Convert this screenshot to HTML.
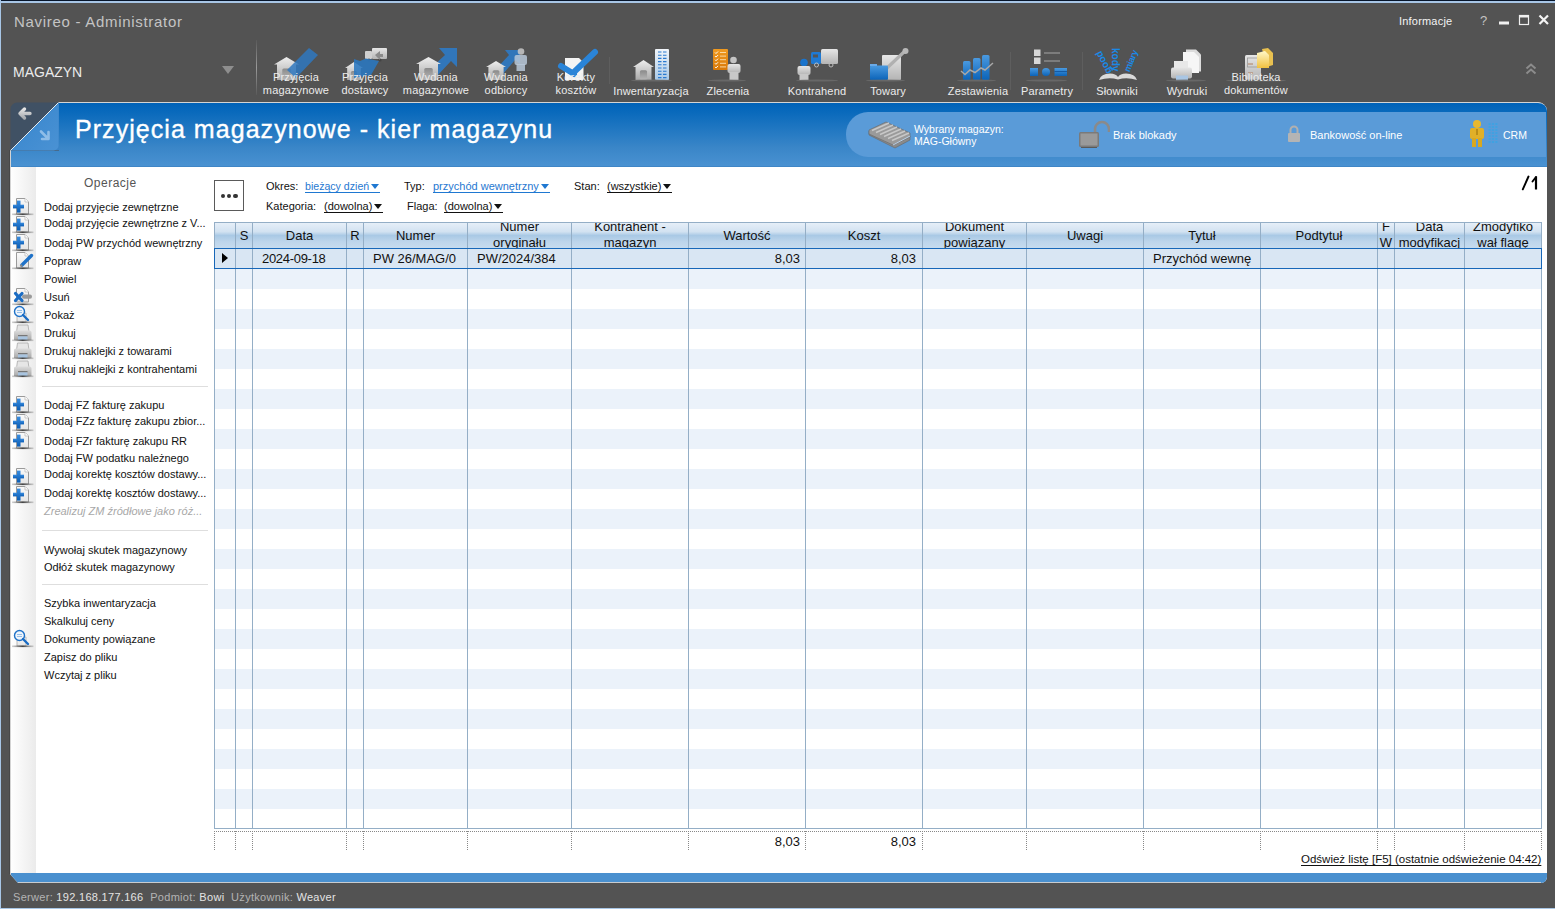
<!DOCTYPE html>
<html><head><meta charset="utf-8">
<style>
*{box-sizing:border-box}
html,body{margin:0;padding:0}
body{width:1555px;height:909px;overflow:hidden;position:relative;background:#535353;font-family:"Liberation Sans",sans-serif}
.a{position:absolute}
.t{position:absolute;white-space:nowrap;line-height:1}
.tl{position:absolute;white-space:nowrap;color:#ececec;font-size:11px;line-height:13px;text-align:center;letter-spacing:0.15px}
.si{position:absolute;left:44px;white-space:nowrap;color:#111;font-size:11px;line-height:13px;letter-spacing:0}
.sep{position:absolute;left:42px;width:166px;height:1px;background:#dedede}
.vl{position:absolute;top:222px;width:1px;height:607px;background:#94aec6}
.row{position:absolute;left:215px;width:1326px;height:20px;background:#ebf2fa}
.gh{position:absolute;top:0;height:25px;text-align:center;color:#111;font-size:13px;line-height:16px;overflow:hidden}
.gc{position:absolute;top:252px;color:#111;font-size:13px;line-height:1;white-space:nowrap}
.dv{position:absolute;top:831px;width:1px;height:19px;background-image:linear-gradient(#888 50%,transparent 50%);background-size:1px 2px}
.flab{position:absolute;color:#111;font-size:11px;line-height:1;white-space:nowrap}
.flnk{position:absolute;font-size:11px;line-height:1;white-space:nowrap;text-decoration:underline;text-underline-offset:2px}
.tri{position:absolute;width:0;height:0;border-left:4px solid transparent;border-right:4px solid transparent;border-top:5px solid #111}
</style></head><body>

<div class="a" style="left:0;top:0;width:1555px;height:1px;background:#06152b"></div>
<div class="a" style="left:0;top:1px;width:1555px;height:2px;background:#a8c6e6"></div>
<div class="a" style="left:0;top:0;width:1px;height:909px;background:#a8c6e6"></div>
<div class="a" style="left:0;top:908px;width:1555px;height:1px;background:#a8c6e6"></div>
<div class="t" style="left:14px;top:14px;font-size:15px;color:#c4c4c4;letter-spacing:0.7px">Navireo - Administrator</div>
<div class="t" style="left:1399px;top:16px;font-size:11px;color:#f4f4f4;letter-spacing:0.2px">Informacje</div>
<div class="t" style="left:13px;top:65px;font-size:14px;color:#ececec">MAGAZYN</div>
<div class="a" style="left:222px;top:66px;width:0;height:0;border-left:6.5px solid transparent;border-right:6.5px solid transparent;border-top:8px solid #8e8e8e"></div>
<div class="a" style="left:256px;top:40px;width:1px;height:55px;background:linear-gradient(#5a5a5a,#9a9a9a 50%,#5a5a5a)"></div>
<div class="a" style="left:10px;top:102px;width:1537px;height:781px;background:#fff;border-left:1px solid #d4d4d4;border-top:1px solid #d4d4d4;border-radius:0 9px 6px 0;overflow:hidden;clip-path:polygon(0 0,100% 0,100% 100%,8px 100%,0 calc(100% - 9px))">
<div class="a" style="left:0;top:0;width:1536px;height:64px;background:linear-gradient(#0062b8 0%,#0a6abc 15%,#3a86c8 70%,#4a92d2 100%)"></div>
<div class="a" style="left:0;top:770px;width:1536px;height:10px;background:#4a90cf"></div>
<div class="a" style="left:0;top:63px;width:1536px;height:1px;background:#3f86c6"></div>
</div>
<div class="t" style="left:75px;top:117px;font-size:25px;color:#fff;letter-spacing:1.05px;-webkit-text-stroke:0.35px #fff">Przyjęcia magazynowe - kier magazynu</div>
<div class="a" style="left:11px;top:167px;width:25px;height:706px;background:linear-gradient(90deg,#fff,#ebebeb)"></div>
<svg class="a" style="left:0;top:0" width="1555" height="100" viewBox="0 0 1555 100"><defs><linearGradient id="gHouse" x1="0" y1="0" x2="0" y2="1"><stop offset="0" stop-color="#eeeeee"/><stop offset="1" stop-color="#a9a9a9"/></linearGradient><linearGradient id="gDoor" x1="0" y1="0" x2="0" y2="1"><stop offset="0" stop-color="#8a8a8a"/><stop offset="1" stop-color="#b8b8b8"/></linearGradient><linearGradient id="gBlue" x1="0" y1="0" x2="0" y2="1"><stop offset="0" stop-color="#4a9ae0"/><stop offset="1" stop-color="#0b63b8"/></linearGradient><linearGradient id="gBlueA" x1="1" y1="0" x2="0" y2="1"><stop offset="0" stop-color="#3f86c8"/><stop offset="1" stop-color="#2a6aa8"/></linearGradient><linearGradient id="gGray" x1="0" y1="0" x2="0" y2="1"><stop offset="0" stop-color="#e6e6e6"/><stop offset="1" stop-color="#b4b4b4"/></linearGradient><linearGradient id="gBld" x1="0" y1="0" x2="0" y2="1"><stop offset="0" stop-color="#f2f6fa"/><stop offset="1" stop-color="#a8c8e6"/></linearGradient><linearGradient id="gOr" x1="0" y1="0" x2="0" y2="1"><stop offset="0" stop-color="#f09a20"/><stop offset="1" stop-color="#d87808"/></linearGradient><linearGradient id="gYel" x1="0" y1="0" x2="0" y2="1"><stop offset="0" stop-color="#fff8c8"/><stop offset="1" stop-color="#f0c040"/></linearGradient></defs><path d="M609.5 57V84" stroke="#5e5e5e" stroke-width="1"/><path d="M1082.5 52V90" stroke="#5e5e5e" stroke-width="1"/><path d="M1010.5 52V90" stroke="#5e5e5e" stroke-width="1"/><path d="M274,64.5 L286.5,57 L299,64.5 L296.0,64.5 L296.0,80 L277.0,80 L277.0,64.5 Z" fill="url(#gHouse)"/><rect x="282.25" y="68.375" width="8.5" height="11.625" rx="1.5" fill="url(#gDoor)"/><path d="M309,48 L318,55 L296,78 L287,70 Z" fill="#2f78c0" opacity="0.85"/><rect x="372" y="48" width="15" height="11" rx="1" fill="url(#gGray)"/><rect x="365" y="51" width="7" height="8" rx="1" fill="#cfcfcf"/><circle cx="369" cy="60" r="1.6" fill="#444"/><circle cx="380" cy="60" r="1.6" fill="#444"/><path d="M375 55l5-4v3h3v3h-3v3z" fill="#8a8a8a"/><path d="M345,68 L354.0,62 L363,68 L360.84,68 L360.84,80 L347.16,80 L347.16,68 Z" fill="url(#gHouse)"/><rect x="350.94" y="71.0" width="6.12" height="9.0" rx="1.5" fill="url(#gDoor)"/><path d="M354,59 L360,61 L366,58.5 L379,61 L371,75 L354,78 Z" fill="#2a78c0" opacity="0.88"/><path d="M439,48 L457,48 L457,67 L451,61 L437,76 L430,69 L445,55 Z" fill="#2f78c0" opacity="0.95"/><path d="M416,64 L428.5,57 L441,64 L438.0,64 L438.0,80 L419.0,80 L419.0,64 Z" fill="url(#gHouse)"/><rect x="424.25" y="68.0" width="8.5" height="12.0" rx="1.5" fill="url(#gDoor)"/><path d="M505,50 L520,50 L520,64 L515,60 L503,74 L497,68 L509,55 Z" fill="#2f78c0" opacity="0.95"/><path d="M486,67 L496.0,61 L506,67 L503.6,67 L503.6,80 L488.4,80 L488.4,67 Z" fill="url(#gHouse)"/><rect x="492.6" y="70.25" width="6.800000000000001" height="9.75" rx="1.5" fill="url(#gDoor)"/><circle cx="521" cy="51.5" r="3.3" fill="#c8c8c8" opacity="0.85"/><rect x="514.5" y="55" width="12.5" height="10" rx="2" fill="#b8c8d8" opacity="0.85"/><rect x="516.5" y="64" width="8.5" height="7" fill="#b8c8d8" opacity="0.85"/><path d="M565,58 H579 L583.5,62.5 V80 H565 Z" fill="#f4f4f4"/><path d="M561,66 L574,74 M573,73 L595,52" stroke="#2a84d8" stroke-width="6" stroke-linecap="round" fill="none"/><path d="M633,67 L643.5,60 L654,67 L651.48,67 L651.48,80 L635.52,80 L635.52,67 Z" fill="url(#gHouse)"/><rect x="639.93" y="70.25" width="7.140000000000001" height="9.75" rx="1.5" fill="url(#gDoor)"/><rect x="655" y="49" width="14" height="31" rx="1" fill="url(#gBld)"/><path d="M658,52.0h3.5M663,52.0h3.5" stroke="#2a7ad0" stroke-width="1.1"/><path d="M658,55.2h3.5M663,55.2h3.5" stroke="#2a7ad0" stroke-width="1.1"/><path d="M658,58.4h3.5M663,58.4h3.5" stroke="#2a7ad0" stroke-width="1.1"/><path d="M658,61.6h3.5M663,61.6h3.5" stroke="#2a7ad0" stroke-width="1.1"/><path d="M658,64.8h3.5M663,64.8h3.5" stroke="#2a7ad0" stroke-width="1.1"/><path d="M658,68.0h3.5M663,68.0h3.5" stroke="#2a7ad0" stroke-width="1.1"/><path d="M658,71.2h3.5M663,71.2h3.5" stroke="#2a7ad0" stroke-width="1.1"/><path d="M658,74.4h3.5M663,74.4h3.5" stroke="#2a7ad0" stroke-width="1.1"/><path d="M658,77.6h3.5M663,77.6h3.5" stroke="#2a7ad0" stroke-width="1.1"/><ellipse cx="651.5" cy="80.5" rx="20.5" ry="1" fill="#6e6e6e" opacity="0.8"/><rect x="713" y="49" width="15" height="21" rx="1" fill="url(#gOr)"/><path d="M715,52.5 l1,1 l2,-2" stroke="#fff" stroke-width="1" fill="none"/><path d="M720,52.5h6" stroke="#fde0b0" stroke-width="0.9"/><path d="M715,56.1 l1,1 l2,-2" stroke="#fff" stroke-width="1" fill="none"/><path d="M720,56.1h6" stroke="#fde0b0" stroke-width="0.9"/><path d="M715,59.7 l1,1 l2,-2" stroke="#fff" stroke-width="1" fill="none"/><path d="M720,59.7h6" stroke="#fde0b0" stroke-width="0.9"/><path d="M715,63.3 l1,1 l2,-2" stroke="#fff" stroke-width="1" fill="none"/><path d="M720,63.3h6" stroke="#fde0b0" stroke-width="0.9"/><path d="M715,66.9 l1,1 l2,-2" stroke="#fff" stroke-width="1" fill="none"/><path d="M720,66.9h6" stroke="#fde0b0" stroke-width="0.9"/><circle cx="733.5" cy="60" r="3.3" fill="#c4c4c4"/><rect x="727.5" y="64" width="13" height="9" rx="2" fill="url(#gGray)"/><rect x="729.5" y="72" width="9" height="8" fill="#c8c8c8"/><ellipse cx="727.0" cy="80.5" rx="19.0" ry="1" fill="#6e6e6e" opacity="0.8"/><circle cx="804" cy="62.5" r="3.8" fill="#1a74cc"/><rect x="797.5" y="66" width="13" height="9" rx="2" fill="url(#gGray)"/><rect x="799.5" y="74" width="9" height="6" fill="#c8c8c8"/><rect x="811" y="52" width="10" height="12" rx="1.5" fill="#1f7ad4"/><rect x="813" y="54.5" width="5" height="3" fill="#555"/><rect x="821" y="49" width="17" height="15" rx="1.5" fill="url(#gGray)"/><circle cx="816.5" cy="65" r="2" fill="none" stroke="#bbb" stroke-width="1"/><circle cx="831" cy="65" r="2" fill="none" stroke="#bbb" stroke-width="1"/><ellipse cx="817.0" cy="80.5" rx="21.0" ry="1" fill="#6e6e6e" opacity="0.8"/><rect x="882" y="55" width="19" height="25" rx="1" fill="url(#gGray)"/><path d="M886,69 L905,51" stroke="#b0b0b0" stroke-width="3.2" stroke-linecap="round"/><circle cx="905.5" cy="51" r="3" fill="#b8b8b8"/><rect x="870" y="65.5" width="18" height="14.5" rx="1" fill="url(#gBlue)"/><rect x="870" y="64" width="7" height="2" fill="#6aaae8"/><ellipse cx="885.5" cy="80.5" rx="19.5" ry="1" fill="#6e6e6e" opacity="0.8"/><rect x="963" y="61" width="7.5" height="19" rx="1.5" fill="url(#gBlue)"/><rect x="973" y="58" width="7.5" height="22" rx="1.5" fill="url(#gBlue)"/><rect x="982" y="55" width="7.5" height="25" rx="1.5" fill="url(#gBlue)"/><path d="M961,71 L965,74.5 L970,70 L975,72.5 L981,68 L985,70 L993,63" stroke="#a8a8a8" stroke-width="1.5" fill="none"/><ellipse cx="976.5" cy="80.5" rx="19.5" ry="1" fill="#6e6e6e" opacity="0.8"/><rect x="1034" y="49.5" width="6.5" height="6.5" fill="#d8d8d8"/><rect x="1034" y="57.5" width="6.5" height="6.5" fill="#d8d8d8"/><path d="M1044,53h16M1044,61h16" stroke="#8a8a8a" stroke-width="1.6"/><rect x="1030" y="68" width="8" height="8" fill="url(#gBlue)"/><circle cx="1046" cy="72" r="4" fill="url(#gBlue)"/><rect x="1054.5" y="68" width="12.5" height="8" fill="url(#gBlue)"/><path d="M1054.5 71.5h12.5" stroke="#0a4a90" stroke-width="0.7"/><ellipse cx="1046.5" cy="80.5" rx="20.5" ry="1" fill="#6e6e6e" opacity="0.8"/><g fill="#1a8ae8" font-family="Liberation Sans" font-weight="bold" font-size="10"><text transform="translate(1112,72) rotate(243)">good</text><text transform="translate(1112,48) rotate(90)">kody</text><text transform="translate(1129.5,72.5) rotate(-68)" font-size="9" letter-spacing="-0.3">miary</text></g><path d="M1099,80 Q1101,73.5 1110,73.5 Q1116,73.5 1118,77 Q1120,73.5 1126,73.5 Q1135,73.5 1137,80 Q1127,77 1118,79.5 Q1109,77 1099,80Z" fill="#dadada"/><path d="M1186,49.5h10l5,5v17h-15z" fill="#dcdcdc"/><path d="M1183,52h11l5,5v16h-16z" fill="#f6f6f6"/><rect x="1174" y="61" width="14" height="7" fill="#e8e8e8"/><rect x="1171" y="67.5" width="21" height="11" rx="2" fill="url(#gGray)"/><rect x="1176" y="75.5" width="12" height="5" fill="#a9c6e4"/><ellipse cx="1186.0" cy="80.5" rx="20.0" ry="1" fill="#6e6e6e" opacity="0.8"/><rect x="1245" y="55" width="16" height="25" rx="1.5" fill="url(#gGray)"/><path d="M1248,64h5M1248,73h5" stroke="#b08060" stroke-width="1"/><rect x="1247.5" y="58" width="11" height="9" fill="none" stroke="#999" stroke-width="0.8"/><path d="M1262,49l6,-1l5,5v12l-6,2z" fill="#e8c050"/><path d="M1257,53l8,-2l4,4v13l-12,0z" fill="url(#gYel)"/><ellipse cx="1256.0" cy="80.5" rx="30.0" ry="1" fill="#6e6e6e" opacity="0.8"/></svg>
<div class="tl" style="left:236px;width:120px;top:71px">Przyjęcia<br>magazynowe</div>
<div class="tl" style="left:305px;width:120px;top:71px">Przyjęcia<br>dostawcy</div>
<div class="tl" style="left:376px;width:120px;top:71px">Wydania<br>magazynowe</div>
<div class="tl" style="left:446px;width:120px;top:71px">Wydania<br>odbiorcy</div>
<div class="tl" style="left:516px;width:120px;top:71px">Korekty<br>kosztów</div>
<div class="tl" style="left:591px;width:120px;top:85px">Inwentaryzacja</div>
<div class="tl" style="left:668px;width:120px;top:85px">Zlecenia</div>
<div class="tl" style="left:757px;width:120px;top:85px">Kontrahend</div>
<div class="tl" style="left:828px;width:120px;top:85px">Towary</div>
<div class="tl" style="left:918px;width:120px;top:85px">Zestawienia</div>
<div class="tl" style="left:987px;width:120px;top:85px">Parametry</div>
<div class="tl" style="left:1057px;width:120px;top:85px">Słowniki</div>
<div class="tl" style="left:1127px;width:120px;top:85px">Wydruki</div>
<div class="tl" style="left:1196px;width:120px;top:71px">Biblioteka<br>dokumentów</div>
<svg class="a" style="left:1524px;top:62px" width="14" height="14" viewBox="0 0 14 14"><path d="M2.5 6.5L7 2.5L11.5 6.5M2.5 11.5L7 7.5L11.5 11.5" stroke="#8c8c8c" stroke-width="2" fill="none"/></svg>
<svg class="a" style="left:1476px;top:12px" width="79" height="16" viewBox="0 0 79 16"><text x="4" y="13" font-family="Liberation Sans" font-size="13" fill="#c4c4c4">?</text><rect x="23" y="9.5" width="10" height="3" fill="#f0f0f0"/><rect x="43.5" y="3.5" width="9" height="9" fill="none" stroke="#f0f0f0" stroke-width="1.2"/><rect x="43" y="3" width="10" height="2.5" fill="#f0f0f0"/><path d="M63.5 3.5L72 12M72 3.5L63.5 12" stroke="#f4f4f4" stroke-width="2.2"/></svg>
<svg class="a" style="left:10px;top:102px" width="50" height="50" viewBox="0 0 50 50"><defs><linearGradient id="gTabB" x1="0" y1="0" x2="1" y2="1"><stop offset="0" stop-color="#3584cc"/><stop offset="1" stop-color="#4a92d4"/></linearGradient><linearGradient id="gArr" x1="0" y1="0" x2="0" y2="1"><stop offset="0" stop-color="#e4e4e4"/><stop offset="1" stop-color="#a8acb0"/></linearGradient></defs><rect x="0" y="0" width="49" height="49" fill="#535353"/><path d="M49,0 V48.5 H0 Z" fill="#3a84c8"/><path d="M7,0.5 H48.5 L0.5,48.5 V7 A6.5 6.5 0 0 1 7,0.5Z" fill="#405164"/><path d="M48.5,1 V43.5 A5 5 0 0 1 43.5,48.5 H1 Z" fill="url(#gTabB)"/><path d="M0.5,48.5 L48.5,0.5" stroke="#e6ecf2" stroke-width="1"/><path d="M0.5,48.5 V50" stroke="#d4d4d4" stroke-width="1"/><path d="M20 11.5H10M14.5 7L10 11.5L14.5 16" stroke="url(#gArr)" stroke-width="3.4" fill="none" stroke-linecap="round" stroke-linejoin="round"/><path d="M31 29.5L38 36.5M38.5 30V37H32" stroke="#8fbde8" stroke-width="2.6" fill="none" stroke-linecap="round" stroke-linejoin="round"/></svg>
<div class="a" style="left:846px;top:112px;width:700px;height:45px;border-radius:22px 0 0 22px;background:#5a9bd8"></div>
<svg class="a" style="left:868px;top:121px" width="43" height="29" viewBox="0 0 43 29"><path d="M1,14 L27,27 L42,19 L42,15 L27,22 L1,10 Z" fill="#8a8a8a" stroke="#666" stroke-width="0.6"/><path d="M1,9 L18,1 L42,12 L42,16 L25,24 L1,13 Z" fill="#9a9a9a" stroke="#666" stroke-width="0.6"/><path d="M4,9.5L21,2M8,11.5L25,4M12,13.5L29,6M16,15.5L33,8M20,17.5L37,10M24,19.5L41,12" stroke="#c8c8c8" stroke-width="1.4"/><path d="M25,24 L42,15" stroke="#b8d0e8" stroke-width="1"/></svg>
<div class="t" style="left:914px;top:123px;font-size:10.5px;line-height:12px;color:#fff">Wybrany magazyn:<br>MAG-Główny</div>
<svg class="a" style="left:1078px;top:120px" width="32" height="29" viewBox="0 0 32 29"><path d="M17,13 V9 A7 7 0 0 1 31,9 V12" stroke="#8a8a8a" stroke-width="2.6" fill="none"/><rect x="1" y="12" width="20" height="15" rx="1.5" fill="#7a7a7a"/><rect x="2.5" y="13.5" width="17" height="12" fill="#9a9a9a"/><path d="M3 27.5h16" stroke="#5a5a5a"/></svg>
<div class="t" style="left:1113px;top:130px;font-size:11px;color:#fff">Brak blokady</div>
<svg class="a" style="left:1287px;top:125px" width="14" height="18" viewBox="0 0 14 18"><path d="M3.5,8 V5 A3.5 3.5 0 0 1 10.5,5 V8" stroke="#b0b0b0" stroke-width="2" fill="none"/><rect x="1" y="8" width="12" height="9" rx="1" fill="#b4b4b4"/></svg>
<div class="t" style="left:1310px;top:130px;font-size:11px;color:#fff">Bankowość on-line</div>
<svg class="a" style="left:1469px;top:119px" width="30" height="30" viewBox="0 0 30 30"><circle cx="8" cy="5" r="4" fill="#e8b830"/><rect x="1" y="9" width="14" height="11" rx="2" fill="#e0b028"/><rect x="3" y="19" width="4" height="9" fill="#d8a820"/><rect x="9" y="19" width="4" height="9" fill="#d8a820"/><path d="M8 10v6" stroke="#a07810" stroke-width="1.2"/><path d="M19.5 5h10M19.5 8h10M19.5 11h10M19.5 14h10M19.5 17h10M19.5 20h10M19.5 23h10" stroke="#38a4e4" stroke-width="1.3" stroke-dasharray="2.2 1.2"/></svg>
<div class="t" style="left:1503px;top:130px;font-size:10.5px;color:#fff">CRM</div>
<svg width="0" height="0" style="position:absolute"><defs><linearGradient id="sLine" x1="0" y1="0" x2="1" y2="0"><stop offset="0" stop-color="#777" stop-opacity="0.3"/><stop offset="0.5" stop-color="#444"/><stop offset="1" stop-color="#777" stop-opacity="0.3"/></linearGradient><linearGradient id="sDoc" x1="0" y1="0" x2="0" y2="1"><stop offset="0" stop-color="#fafafa"/><stop offset="1" stop-color="#e4e4e4"/></linearGradient><linearGradient id="sPlus" x1="0" y1="0" x2="0" y2="1"><stop offset="0" stop-color="#3a8ee0"/><stop offset="1" stop-color="#0a5cb4"/></linearGradient><linearGradient id="sPr" x1="0" y1="0" x2="0" y2="1"><stop offset="0" stop-color="#dcdcdc"/><stop offset="1" stop-color="#a8a8a8"/></linearGradient></defs></svg>
<div class="t" style="left:84px;top:177px;font-size:12px;color:#555;letter-spacing:0.5px">Operacje</div>
<div class="si" style="top:201px">Dodaj przyjęcie zewnętrzne</div>
<svg class="a" style="left:11px;top:197px" width="24" height="19" viewBox="0 0 24 19"><path d="M5.5,1.5 H14 L17.5,5 V17 H5.5 Z" fill="url(#sDoc)" stroke="#9a9a9a" stroke-width="1"/><path d="M14,1.5 V5 H17.5" fill="#fff" stroke="#bbb" stroke-width="0.8"/><rect x="2" y="7.7" width="11" height="3.7" fill="url(#sPlus)"/><rect x="6" y="3.6" width="3.5" height="12" fill="url(#sPlus)"/><rect x="1" y="16.5" width="21.5" height="1.6" fill="url(#sLine)"/></svg>
<div class="si" style="top:217px">Dodaj przyjęcie zewnętrzne z V...</div>
<svg class="a" style="left:11px;top:215px" width="24" height="19" viewBox="0 0 24 19"><path d="M5.5,1.5 H14 L17.5,5 V17 H5.5 Z" fill="url(#sDoc)" stroke="#9a9a9a" stroke-width="1"/><path d="M14,1.5 V5 H17.5" fill="#fff" stroke="#bbb" stroke-width="0.8"/><rect x="2" y="7.7" width="11" height="3.7" fill="url(#sPlus)"/><rect x="6" y="3.6" width="3.5" height="12" fill="url(#sPlus)"/><rect x="1" y="16.5" width="21.5" height="1.6" fill="url(#sLine)"/></svg>
<div class="si" style="top:237px">Dodaj PW przychód wewnętrzny</div>
<svg class="a" style="left:11px;top:233px" width="24" height="19" viewBox="0 0 24 19"><path d="M5.5,1.5 H14 L17.5,5 V17 H5.5 Z" fill="url(#sDoc)" stroke="#9a9a9a" stroke-width="1"/><path d="M14,1.5 V5 H17.5" fill="#fff" stroke="#bbb" stroke-width="0.8"/><rect x="2" y="7.7" width="11" height="3.7" fill="url(#sPlus)"/><rect x="6" y="3.6" width="3.5" height="12" fill="url(#sPlus)"/><rect x="1" y="16.5" width="21.5" height="1.6" fill="url(#sLine)"/></svg>
<div class="si" style="top:255px">Popraw</div>
<svg class="a" style="left:11px;top:251px" width="24" height="19" viewBox="0 0 24 19"><path d="M5.5,1.5 H14 L17.5,5 V17 H5.5 Z" fill="url(#sDoc)" stroke="#9a9a9a" stroke-width="1"/><path d="M14,1.5 V5 H17.5" fill="#fff" stroke="#bbb" stroke-width="0.8"/><path d="M11,14 L20.5,4.5" stroke="#1f72c8" stroke-width="3.4" stroke-linecap="round"/><path d="M9.5,15.5 l1.5,-1.5" stroke="#888" stroke-width="2"/><rect x="1" y="16.5" width="21.5" height="1.6" fill="url(#sLine)"/></svg>
<div class="si" style="top:273px">Powiel</div>
<div class="si" style="top:291px">Usuń</div>
<svg class="a" style="left:11px;top:287px" width="24" height="19" viewBox="0 0 24 19"><path d="M5.5,1.5 H14 L17.5,5 V15 H5.5 Z" fill="url(#sDoc)" stroke="#9a9a9a" stroke-width="1"/><path d="M14,1.5 V5 H17.5" fill="#fff" stroke="#bbb" stroke-width="0.8"/><rect x="11" y="7.5" width="10" height="4.2" rx="2" fill="#9a9a9a"/><path d="M4.5,6.5 L11,13.5 M11,6.5 L4.5,13.5" stroke="#1a6cc4" stroke-width="3.2" stroke-linecap="round"/><rect x="1" y="16.5" width="21.5" height="1.6" fill="url(#sLine)"/></svg>
<div class="si" style="top:309px">Pokaż</div>
<svg class="a" style="left:11px;top:305px" width="24" height="19" viewBox="0 0 24 19"><path d="M6,8 H15 V17 H6 Z" fill="url(#sDoc)" stroke="#aaa" stroke-width="0.8"/><circle cx="8.5" cy="6.5" r="5" fill="#eef4fb" stroke="#1f72c8" stroke-width="1.4"/><path d="M6,5.5h5M6,7.5h5" stroke="#8ab8e4" stroke-width="0.9"/><path d="M12,10 L17,15" stroke="#1a6cc4" stroke-width="2.4" stroke-linecap="round"/><rect x="1" y="16.5" width="21.5" height="1.6" fill="url(#sLine)"/></svg>
<div class="si" style="top:327px">Drukuj</div>
<svg class="a" style="left:11px;top:323px" width="24" height="19" viewBox="0 0 24 19"><path d="M6.5,2 H17 L18,9 H5.5 Z" fill="#e6e6e6" stroke="#aaa" stroke-width="0.8"/><path d="M3,9 Q3,7.5 5,7.5 H18.5 Q20.5,7.5 20.5,9 V17 H3 Z" fill="url(#sPr)"/><rect x="7" y="12" width="9.5" height="1.4" fill="#777"/><rect x="7" y="13.4" width="9.5" height="3.6" fill="#a8c4e0"/><rect x="1" y="16.5" width="21.5" height="1.6" fill="url(#sLine)"/></svg>
<div class="si" style="top:345px">Drukuj naklejki z towarami</div>
<svg class="a" style="left:11px;top:341px" width="24" height="19" viewBox="0 0 24 19"><path d="M6.5,2 H17 L18,9 H5.5 Z" fill="#e6e6e6" stroke="#aaa" stroke-width="0.8"/><path d="M3,9 Q3,7.5 5,7.5 H18.5 Q20.5,7.5 20.5,9 V17 H3 Z" fill="url(#sPr)"/><rect x="7" y="12" width="9.5" height="1.4" fill="#777"/><rect x="7" y="13.4" width="9.5" height="3.6" fill="#a8c4e0"/><rect x="1" y="16.5" width="21.5" height="1.6" fill="url(#sLine)"/></svg>
<div class="si" style="top:363px">Drukuj naklejki z kontrahentami</div>
<svg class="a" style="left:11px;top:359px" width="24" height="19" viewBox="0 0 24 19"><path d="M6.5,2 H17 L18,9 H5.5 Z" fill="#e6e6e6" stroke="#aaa" stroke-width="0.8"/><path d="M3,9 Q3,7.5 5,7.5 H18.5 Q20.5,7.5 20.5,9 V17 H3 Z" fill="url(#sPr)"/><rect x="7" y="12" width="9.5" height="1.4" fill="#777"/><rect x="7" y="13.4" width="9.5" height="3.6" fill="#a8c4e0"/><rect x="1" y="16.5" width="21.5" height="1.6" fill="url(#sLine)"/></svg>
<div class="si" style="top:399px">Dodaj FZ fakturę zakupu</div>
<svg class="a" style="left:11px;top:395px" width="24" height="19" viewBox="0 0 24 19"><path d="M5.5,1.5 H14 L17.5,5 V17 H5.5 Z" fill="url(#sDoc)" stroke="#9a9a9a" stroke-width="1"/><path d="M14,1.5 V5 H17.5" fill="#fff" stroke="#bbb" stroke-width="0.8"/><rect x="2" y="7.7" width="11" height="3.7" fill="url(#sPlus)"/><rect x="6" y="3.6" width="3.5" height="12" fill="url(#sPlus)"/><rect x="1" y="16.5" width="21.5" height="1.6" fill="url(#sLine)"/></svg>
<div class="si" style="top:415px">Dodaj FZz fakturę zakupu zbior...</div>
<svg class="a" style="left:11px;top:413px" width="24" height="19" viewBox="0 0 24 19"><path d="M5.5,1.5 H14 L17.5,5 V17 H5.5 Z" fill="url(#sDoc)" stroke="#9a9a9a" stroke-width="1"/><path d="M14,1.5 V5 H17.5" fill="#fff" stroke="#bbb" stroke-width="0.8"/><rect x="2" y="7.7" width="11" height="3.7" fill="url(#sPlus)"/><rect x="6" y="3.6" width="3.5" height="12" fill="url(#sPlus)"/><rect x="1" y="16.5" width="21.5" height="1.6" fill="url(#sLine)"/></svg>
<div class="si" style="top:435px">Dodaj FZr fakturę zakupu RR</div>
<svg class="a" style="left:11px;top:431px" width="24" height="19" viewBox="0 0 24 19"><path d="M5.5,1.5 H14 L17.5,5 V17 H5.5 Z" fill="url(#sDoc)" stroke="#9a9a9a" stroke-width="1"/><path d="M14,1.5 V5 H17.5" fill="#fff" stroke="#bbb" stroke-width="0.8"/><rect x="2" y="7.7" width="11" height="3.7" fill="url(#sPlus)"/><rect x="6" y="3.6" width="3.5" height="12" fill="url(#sPlus)"/><rect x="1" y="16.5" width="21.5" height="1.6" fill="url(#sLine)"/></svg>
<div class="si" style="top:452px">Dodaj FW podatku należnego</div>
<div class="si" style="top:468px">Dodaj korektę kosztów dostawy...</div>
<svg class="a" style="left:11px;top:467px" width="24" height="19" viewBox="0 0 24 19"><path d="M5.5,1.5 H14 L17.5,5 V17 H5.5 Z" fill="url(#sDoc)" stroke="#9a9a9a" stroke-width="1"/><path d="M14,1.5 V5 H17.5" fill="#fff" stroke="#bbb" stroke-width="0.8"/><rect x="2" y="7.7" width="11" height="3.7" fill="url(#sPlus)"/><rect x="6" y="3.6" width="3.5" height="12" fill="url(#sPlus)"/><rect x="1" y="16.5" width="21.5" height="1.6" fill="url(#sLine)"/></svg>
<div class="si" style="top:487px">Dodaj korektę kosztów dostawy...</div>
<svg class="a" style="left:11px;top:485px" width="24" height="19" viewBox="0 0 24 19"><path d="M5.5,1.5 H14 L17.5,5 V17 H5.5 Z" fill="url(#sDoc)" stroke="#9a9a9a" stroke-width="1"/><path d="M14,1.5 V5 H17.5" fill="#fff" stroke="#bbb" stroke-width="0.8"/><rect x="2" y="7.7" width="11" height="3.7" fill="url(#sPlus)"/><rect x="6" y="3.6" width="3.5" height="12" fill="url(#sPlus)"/><rect x="1" y="16.5" width="21.5" height="1.6" fill="url(#sLine)"/></svg>
<div class="si" style="top:505px;color:#a8a8a8;font-style:italic">Zrealizuj ZM źródłowe jako róż...</div>
<div class="si" style="top:544px">Wywołaj skutek magazynowy</div>
<div class="si" style="top:561px">Odłóż skutek magazynowy</div>
<div class="si" style="top:597px">Szybka inwentaryzacja</div>
<div class="si" style="top:615px">Skalkuluj ceny</div>
<div class="si" style="top:633px">Dokumenty powiązane</div>
<svg class="a" style="left:11px;top:629px" width="24" height="19" viewBox="0 0 24 19"><path d="M6,8 H15 V17 H6 Z" fill="url(#sDoc)" stroke="#aaa" stroke-width="0.8"/><circle cx="8.5" cy="6.5" r="5" fill="#eef4fb" stroke="#1f72c8" stroke-width="1.4"/><path d="M6,5.5h5M6,7.5h5" stroke="#8ab8e4" stroke-width="0.9"/><path d="M12,10 L17,15" stroke="#1a6cc4" stroke-width="2.4" stroke-linecap="round"/><rect x="1" y="16.5" width="21.5" height="1.6" fill="url(#sLine)"/></svg>
<div class="si" style="top:651px">Zapisz do pliku</div>
<div class="si" style="top:669px">Wczytaj z pliku</div>
<div class="sep" style="top:386px"></div>
<div class="sep" style="top:530px"></div>
<div class="sep" style="top:584px"></div>
<div class="a" style="left:214px;top:180px;width:30px;height:31px;border:1px solid #5a5a5a;background:#fff"></div>
<div class="a" style="left:221px;top:193.5px;width:4.4px;height:4.4px;border-radius:50%;background:#333"></div>
<div class="a" style="left:227px;top:193.5px;width:4.4px;height:4.4px;border-radius:50%;background:#333"></div>
<div class="a" style="left:233.2px;top:193.5px;width:4.4px;height:4.4px;border-radius:50%;background:#333"></div>
<div class="flab" style="left:266px;top:181px">Okres:</div>
<div class="flab" style="left:305px;top:181px;color:#1f78d1;font-size:10.6px">bieżący dzień</div>
<div class="a" style="left:305px;top:192px;width:75px;height:1px;background:#1f78d1"></div>
<div class="tri" style="left:371px;top:184px;border-top-color:#1f78d1"></div>
<div class="flab" style="left:404px;top:181px">Typ:</div>
<div class="flab" style="left:433px;top:181px;color:#1f78d1;font-size:11px">przychód wewnętrzny</div>
<div class="a" style="left:433px;top:192px;width:117px;height:1px;background:#1f78d1"></div>
<div class="tri" style="left:541px;top:184px;border-top-color:#1f78d1"></div>
<div class="flab" style="left:574px;top:181px">Stan:</div>
<div class="flab" style="left:607px;top:181px;color:#111;font-size:11px">(wszystkie)</div>
<div class="a" style="left:607px;top:192px;width:65px;height:1px;background:#111"></div>
<div class="tri" style="left:663px;top:184px;border-top-color:#111"></div>
<div class="flab" style="left:266px;top:201px">Kategoria:</div>
<div class="flab" style="left:324px;top:201px;color:#111;font-size:11px">(dowolna)</div>
<div class="a" style="left:324px;top:212px;width:59px;height:1px;background:#111"></div>
<div class="tri" style="left:374px;top:204px;border-top-color:#111"></div>
<div class="flab" style="left:407px;top:201px">Flaga:</div>
<div class="flab" style="left:444px;top:201px;color:#111;font-size:11px">(dowolna)</div>
<div class="a" style="left:444px;top:212px;width:59px;height:1px;background:#111"></div>
<div class="tri" style="left:494px;top:204px;border-top-color:#111"></div>
<svg class="a" style="left:1518px;top:172px" width="24" height="22" viewBox="0 0 24 22"><path d="M4.8,17.3 L10.5,4.5" stroke="#000" stroke-width="1.9" stroke-linecap="round"/><path d="M18,4.5 V17.5" stroke="#000" stroke-width="2.2"/><path d="M14.5,9.5 L18,5" stroke="#000" stroke-width="1.9" stroke-linecap="round"/></svg>
<div class="row" style="top:269px"></div>
<div class="row" style="top:309px"></div>
<div class="row" style="top:349px"></div>
<div class="row" style="top:389px"></div>
<div class="row" style="top:429px"></div>
<div class="row" style="top:469px"></div>
<div class="row" style="top:509px"></div>
<div class="row" style="top:549px"></div>
<div class="row" style="top:589px"></div>
<div class="row" style="top:629px"></div>
<div class="row" style="top:669px"></div>
<div class="row" style="top:709px"></div>
<div class="row" style="top:749px"></div>
<div class="row" style="top:789px"></div>
<div class="a" style="left:215px;top:223px;width:1326px;height:25px;background:linear-gradient(#e6eff8 0%,#d2e2f1 35%,#a9c9e5 50%,#bdd5eb 75%,#c6dbee 100%)"></div>
<div class="a" style="left:214px;top:248px;width:1328px;height:21px;background:#d9e6f3;border:1px solid #1767b8"></div>
<div class="a" style="left:214px;top:222px;width:1328px;height:1px;background:#94aec6"></div>
<div class="a" style="left:214px;top:828px;width:1328px;height:1px;background:#94aec6"></div>
<div class="vl" style="left:214px"></div>
<div class="vl" style="left:235px"></div>
<div class="vl" style="left:252px"></div>
<div class="vl" style="left:346px"></div>
<div class="vl" style="left:363px"></div>
<div class="vl" style="left:467px"></div>
<div class="vl" style="left:571px"></div>
<div class="vl" style="left:688px"></div>
<div class="vl" style="left:805px"></div>
<div class="vl" style="left:922px"></div>
<div class="vl" style="left:1026px"></div>
<div class="vl" style="left:1143px"></div>
<div class="vl" style="left:1260px"></div>
<div class="vl" style="left:1377px"></div>
<div class="vl" style="left:1394px"></div>
<div class="vl" style="left:1464px"></div>
<div class="vl" style="left:1541px"></div>
<div class="a" style="left:214px;top:248px;width:1328px;height:1px;background:#1767b8"></div>
<div class="a" style="left:214px;top:268px;width:1328px;height:1px;background:#1767b8"></div>
<div class="a" style="left:214px;top:248px;width:1px;height:21px;background:#1767b8"></div>
<div class="a" style="left:1541px;top:248px;width:1px;height:21px;background:#1767b8"></div>
<div class="a" style="left:0;top:223px;width:1555px;height:25px;overflow:hidden">
<div class="gh" style="left:236px;width:16px;top:5px;height:40px">S</div>
<div class="gh" style="left:253px;width:93px;top:5px;height:40px">Data</div>
<div class="gh" style="left:347px;width:16px;top:5px;height:40px">R</div>
<div class="gh" style="left:364px;width:103px;top:5px;height:40px">Numer</div>
<div class="gh" style="left:468px;width:103px;top:-4px;height:40px">Numer<br>oryginału</div>
<div class="gh" style="left:572px;width:116px;top:-4px;height:40px">Kontrahent -<br>magazyn</div>
<div class="gh" style="left:689px;width:116px;top:5px;height:40px">Wartość</div>
<div class="gh" style="left:806px;width:116px;top:5px;height:40px">Koszt</div>
<div class="gh" style="left:923px;width:103px;top:-4px;height:40px">Dokument<br>powiązany</div>
<div class="gh" style="left:1027px;width:116px;top:5px;height:40px">Uwagi</div>
<div class="gh" style="left:1144px;width:116px;top:5px;height:40px">Tytuł</div>
<div class="gh" style="left:1261px;width:116px;top:5px;height:40px">Podtytuł</div>
<div class="gh" style="left:1378px;width:16px;top:-4px;height:40px">F<br>W</div>
<div class="gh" style="left:1395px;width:69px;top:-4px;height:40px">Data<br>modyfikacj</div>
<div class="gh" style="left:1465px;width:76px;top:-4px;height:40px">Zmodyfiko<br>wał flagę</div>
</div>
<div class="a" style="left:222px;top:253px;width:0;height:0;border-top:5.5px solid transparent;border-bottom:5.5px solid transparent;border-left:6px solid #000"></div>
<div class="gc" style="left:262px;letter-spacing:-0.3px">2024-09-18</div>
<div class="gc" style="left:373px">PW 26/MAG/0</div>
<div class="gc" style="left:477px">PW/2024/384</div>
<div class="gc" style="left:689px;width:111px;text-align:right">8,03</div>
<div class="gc" style="left:806px;width:110px;text-align:right">8,03</div>
<div class="gc" style="left:1153px">Przychód wewnę</div>
<div class="a" style="left:214px;top:831px;width:1328px;height:1px;background-image:linear-gradient(90deg,#888 50%,transparent 50%);background-size:2px 1px"></div>
<div class="dv" style="left:214px"></div>
<div class="dv" style="left:235px"></div>
<div class="dv" style="left:252px"></div>
<div class="dv" style="left:346px"></div>
<div class="dv" style="left:363px"></div>
<div class="dv" style="left:467px"></div>
<div class="dv" style="left:571px"></div>
<div class="dv" style="left:688px"></div>
<div class="dv" style="left:805px"></div>
<div class="dv" style="left:922px"></div>
<div class="dv" style="left:1026px"></div>
<div class="dv" style="left:1143px"></div>
<div class="dv" style="left:1260px"></div>
<div class="dv" style="left:1377px"></div>
<div class="dv" style="left:1394px"></div>
<div class="dv" style="left:1464px"></div>
<div class="dv" style="left:1541px"></div>
<div class="gc" style="top:835px;left:689px;width:111px;text-align:right">8,03</div>
<div class="gc" style="top:835px;left:806px;width:110px;text-align:right">8,03</div>
<div class="a" style="left:18px;top:882px;width:1523px;height:1px;background:#c8ccd0"></div>
<div class="a" style="left:9px;top:150px;width:1px;height:724px;background:#484848"></div>
<div class="t" style="left:1301px;top:854px;font-size:11.5px;color:#111;text-decoration:underline;text-underline-offset:2px">Odśwież listę [F5] (ostatnie odświeżenie 04:42)</div>
<div class="t" style="left:13px;top:892px;font-size:11px;color:#b4b4b4;letter-spacing:0.3px">Serwer: <span style="color:#e4e4e4">192.168.177.166</span>&nbsp; Podmiot: <span style="color:#e4e4e4">Bowi</span>&nbsp; Użytkownik: <span style="color:#e4e4e4">Weaver</span></div>
</body></html>
